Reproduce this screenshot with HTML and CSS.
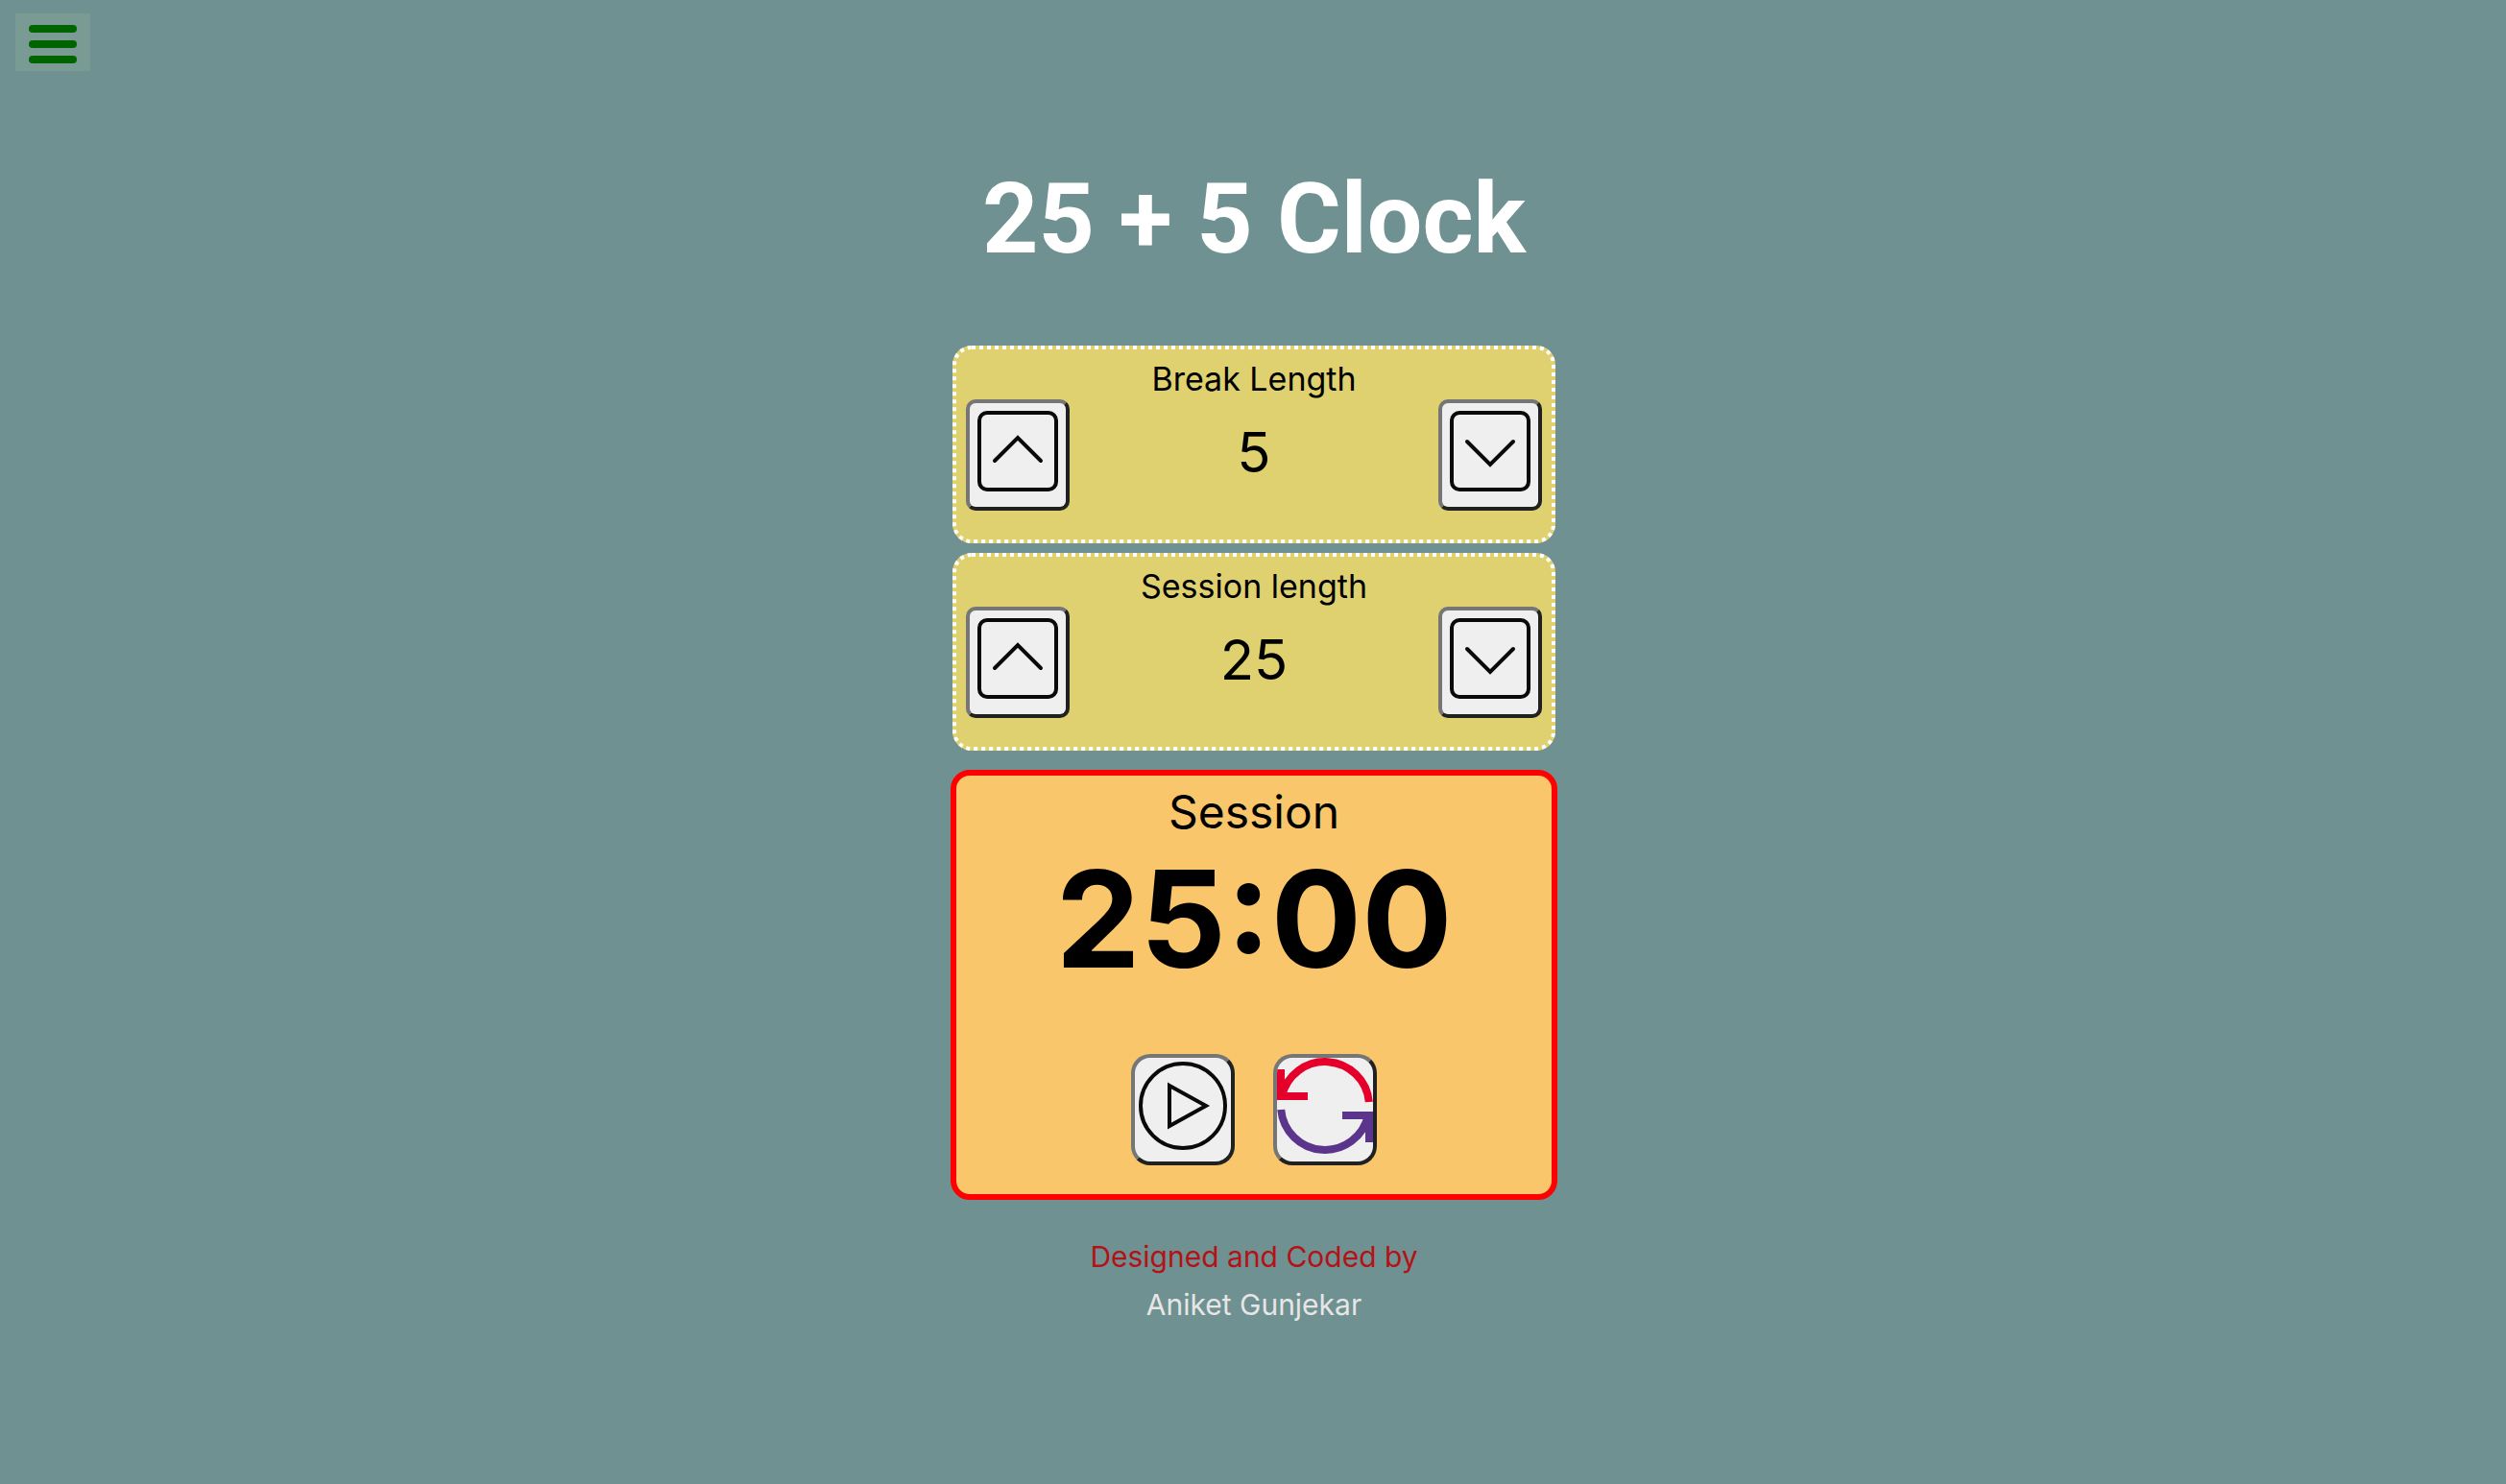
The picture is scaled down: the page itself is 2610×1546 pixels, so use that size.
FILE: index.html
```html
<!DOCTYPE html>
<html lang="en">
<head>
<meta charset="utf-8">
<meta name="viewport" content="width=device-width, initial-scale=1">
<title>25 + 5 Clock</title>
<link rel="stylesheet" href="styles.css">
</head>
<body>
<header class="topbar">
  <button class="menu" type="button" aria-label="Menu"><span class="menu-bar"></span><span class="menu-bar"></span><span class="menu-bar"></span></button>
</header>
<main class="clock">
  <h1 class="title">25 + 5 Clock</h1>
  <section class="length">
    <svg class="dots" aria-hidden="true"><rect class="dots-line" x="2" y="2" rx="18"/></svg>
    <h2 class="length-label">Break Length</h2>
    <div class="length-row">
      <button class="btn" type="button" aria-label="Increase break length">
        <svg class="icon" viewBox="0 0 100 100"><rect x="10" y="10" width="80" height="80" rx="8"/><path d="M26 60 50 36 74 60"/></svg>
      </button>
      <span class="length-value">5</span>
      <button class="btn" type="button" aria-label="Decrease break length">
        <svg class="icon" viewBox="0 0 100 100"><rect x="10" y="10" width="80" height="80" rx="8"/><path d="M26 40 50 64 74 40"/></svg>
      </button>
    </div>
  </section>
  <section class="length">
    <svg class="dots" aria-hidden="true"><rect class="dots-line" x="2" y="2" rx="18"/></svg>
    <h2 class="length-label">Session length</h2>
    <div class="length-row">
      <button class="btn" type="button" aria-label="Increase session length">
        <svg class="icon" viewBox="0 0 100 100"><rect x="10" y="10" width="80" height="80" rx="8"/><path d="M26 60 50 36 74 60"/></svg>
      </button>
      <span class="length-value">25</span>
      <button class="btn" type="button" aria-label="Decrease session length">
        <svg class="icon" viewBox="0 0 100 100"><rect x="10" y="10" width="80" height="80" rx="8"/><path d="M26 40 50 64 74 40"/></svg>
      </button>
    </div>
  </section>
  <section class="timer">
    <h2 class="timer-label">Session</h2>
    <div class="timer-value">25:00</div>
    <div class="timer-controls">
      <button class="btn btn-round" type="button" aria-label="Start">
        <svg class="icon" viewBox="0 0 100 100"><circle cx="50" cy="50" r="44"/><path d="M36 29 74 50 36 71Z"/></svg>
      </button>
      <button class="btn btn-round" type="button" aria-label="Reset">
        <svg class="icon icon-reset" viewBox="0 0 100 100"><g class="reset-top"><path d="M95.8 46A46 46 0 0 0 5.1 40"/><path d="M4 12V40H32"/></g><g class="reset-bottom"><path d="M4.2 54A46 46 0 0 0 94.9 60"/><path d="M96 88V60H68"/></g></svg>
      </button>
    </div>
  </section>
</main>
<footer class="credit">
  <p class="credit-line">Designed and Coded by</p>
  <a class="credit-name" href="#">Aniket Gunjekar</a>
</footer>
</body>
</html>
```
FILE: styles.css
```css
* {
  box-sizing: border-box;
}

body {
  margin: 0;
  padding-left: 2px;
  min-height: 100vh;
  background: #6f9191;
  color: #000;
  font-family: Inter, Roboto, sans-serif;
}

h1,
h2,
p {
  margin: 0;
  font-weight: 400;
}

.topbar {
  display: flex;
  padding: 14px 14px 0;
}

.menu {
  display: flex;
  flex-direction: column;
  gap: 8px;
  padding: 12px 14px 8px;
  border: 0;
  background: #7a9a94;
}

.menu-bar {
  width: 50px;
  height: 8px;
  border-radius: 4px;
  background: #006400;
}

.clock {
  display: flex;
  flex-direction: column;
  align-items: center;
  max-width: 632px;
  margin: 94px auto 0;
}

.title {
  margin-bottom: 72px;
  color: #fff;
  font-family: Roboto, Inter, sans-serif;
  font-size: 102px;
  font-weight: 700;
  line-height: 120px;
}

.length {
  position: relative;
  width: 100%;
  max-width: 628px;
  margin-bottom: 10px;
  padding: 14px 14px 34px;
  border-radius: 20px;
  background: #dfd170;
  text-align: center;
}

/* Square-dotted outline laid over the card's edge */
.dots {
  position: absolute;
  inset: 0;
  width: 100%;
  height: 100%;
  pointer-events: none;
}

.dots-line {
  width: calc(100% - 4px);
  height: calc(100% - 4px);
  fill: none;
  stroke: #fff;
  stroke-width: 4;
  stroke-dasharray: 4 4;
}

.length-label {
  font-size: 34px;
  line-height: 42px;
}

.length-row {
  display: flex;
  justify-content: space-between;
}

.length-value {
  font-size: 58px;
  line-height: 110px;
}

.btn {
  display: flex;
  width: 108px;
  height: 116px;
  padding: 0;
  overflow: hidden;
  border: 4px solid;
  border-color: #767676 #212121 #212121 #767676;
  border-radius: 10px;
  background: #efefef;
}

.btn-round {
  border-radius: 20px;
}

.icon {
  width: 100px;
  height: 100px;
  fill: none;
  stroke: #0a0a0a;
  stroke-width: 4;
  stroke-linecap: round;
}

.icon-reset {
  stroke-width: 8;
  stroke-linecap: butt;
}

.reset-top {
  stroke: #e4002b;
}

.reset-bottom {
  stroke: #5b348b;
}

.timer {
  width: 100%;
  margin-top: 10px;
  padding: 10px 10px 30px;
  border: 6px solid #f00;
  border-radius: 20px;
  background: #f9c66b;
  text-align: center;
}

.timer-label {
  font-size: 48px;
  line-height: 56px;
}

.timer-value {
  margin-bottom: 58px;
  font-size: 140px;
  font-weight: 700;
  line-height: 166px;
}

.timer-controls {
  display: flex;
  justify-content: center;
  gap: 40px;
}

.credit {
  display: flex;
  flex-direction: column;
  align-items: center;
  margin-top: 34px;
  font-size: 30px;
  line-height: 50px;
}

.credit-line {
  color: #b31217;
}

.credit-name {
  color: #e6e6e6;
  text-decoration: none;
}
```
